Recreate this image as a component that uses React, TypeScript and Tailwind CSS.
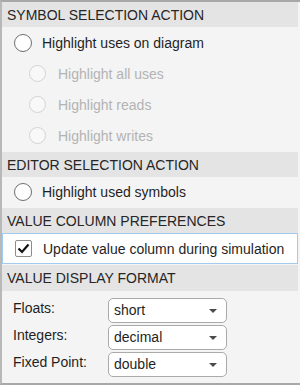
import * as React from "react";

const font = { fontFamily: '"Liberation Sans", Arial, sans-serif' };

function Header({ title, tall }: { title: string; tall?: boolean }) {
  return (
    <div
      className={`${tall ? "h-[26px]" : "h-[25px]"} shrink-0 bg-[#e4e4e4] pl-[5px] flex items-center text-[14px] text-[#262626] leading-none`}
    >
      {title}
    </div>
  );
}

function Radio({ label, disabled, tall }: { label: string; disabled?: boolean; tall?: boolean }) {
  return (
    <div
      className={`${tall ? "h-[31px]" : "h-[30px]"} flex items-center ${
        disabled ? "pl-[27px] gap-[12px]" : "pl-[12px] gap-[10px]"
      }`}
    >
      <span
        className={`rounded-full ${
          disabled
            ? "w-[17px] h-[17px] border border-[#d3d3d3] bg-[#f8f8f8]"
            : "w-[18px] h-[18px] border-[1.5px] border-[#6f6f6f] bg-white"
        }`}
      />
      <span className={`text-[14px] leading-none ${disabled ? "text-[#b3b3b3]" : "text-[#1f1f1f]"}`}>{label}</span>
    </div>
  );
}

function Select({ value }: { value: string }) {
  return (
    <div className="w-[119px] h-[25px] rounded-[5px] border border-[#aaaaaa] bg-white flex items-center justify-between pl-[5px] pr-[9px] text-[14px] text-[#1f1f1f]">
      <span>{value}</span>
      <svg width="8" height="4" viewBox="0 0 8 4">
        <path d="M0 0 L8 0 L4 4 Z" fill="#4a4a4a" />
      </svg>
    </div>
  );
}

export default function App() {
  const formats = [
    { label: "Floats:", value: "short" },
    { label: "Integers:", value: "decimal" },
    { label: "Fixed Point:", value: "double" },
  ];

  return (
    <div
      style={font}
      className="w-[300px] h-[385px] bg-[#f4f4f4] border-t-2 border-b-2 border-l-2 border-[#a8a8a8] border-l-[#b8b8b8] pr-[2px] flex flex-col overflow-hidden"
    >
      <Header title="SYMBOL SELECTION ACTION" />
      <div className="pb-[1px]">
        <Radio label="Highlight uses on diagram" tall />
        <Radio label="Highlight all uses" disabled tall />
        <Radio label="Highlight reads" disabled tall />
        <Radio label="Highlight writes" disabled tall />
      </div>

      <Header title="EDITOR SELECTION ACTION" />
      <div className="pb-[1px]">
        <Radio label="Highlight used symbols" />
      </div>

      <Header title="VALUE COLUMN PREFERENCES" />
      <div className="h-[31px] shrink-0 bg-white border border-[#a3cbee] flex items-center pl-[12px] gap-[11px]">
        <span className="w-[17px] h-[17px] border border-[#8c8c8c] rounded-[2px] bg-white flex items-center justify-center">
          <svg width="13" height="11" viewBox="0 0 13 11">
            <path d="M1.5 5.5 L5 9 L11.5 1.5" fill="none" stroke="#111" strokeWidth="2.2" />
          </svg>
        </span>
        <span className="text-[14px] text-[#1f1f1f] leading-none">Update value column during simulation</span>
      </div>

      <div className="h-[1px] shrink-0" />
      <Header title="VALUE DISPLAY FORMAT" tall />

      <div className="pt-[7px] flex flex-col gap-[2px]">
        {formats.map((f) => (
          <div key={f.label} className="flex items-center">
            <span className="w-[106px] pl-[11px] pb-[4px] text-[14px] text-[#1f1f1f]">{f.label}</span>
            <Select value={f.value} />
          </div>
        ))}
      </div>
    </div>
  );
}
